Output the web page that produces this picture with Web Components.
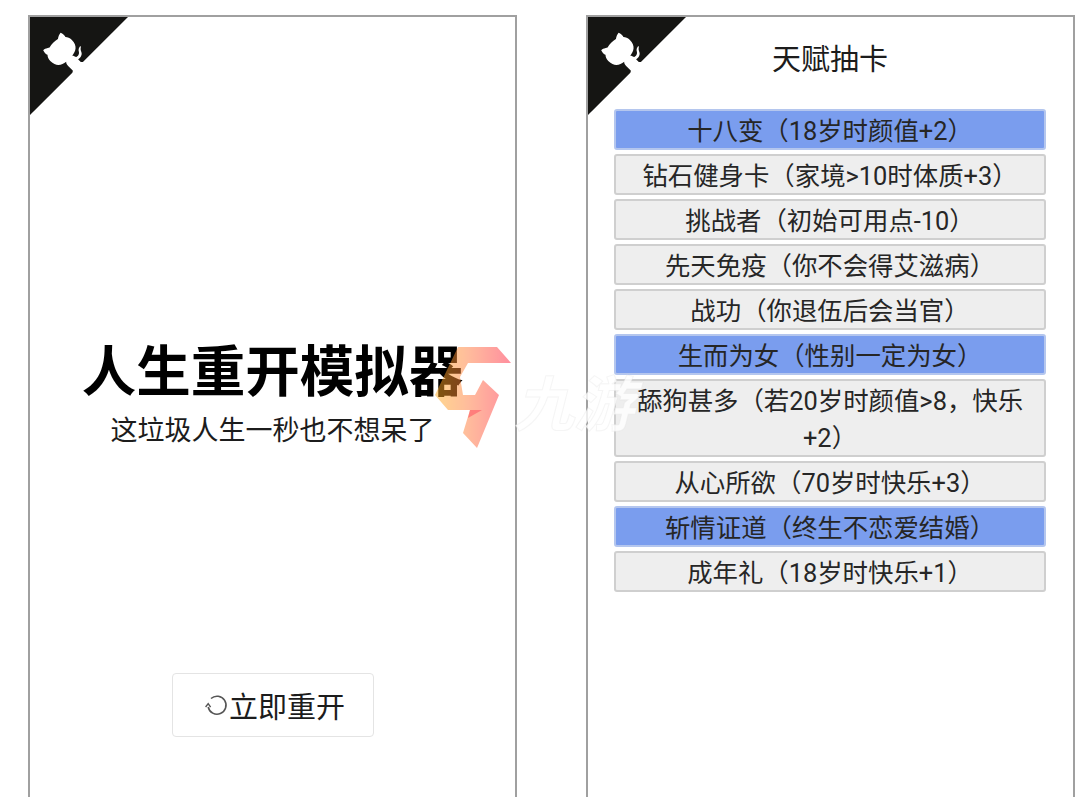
<!DOCTYPE html>
<html lang="zh">
<head>
<meta charset="utf-8">
<title>人生重开模拟器</title>
<style>
    html, body { margin: 0; height: 797px; overflow: hidden; background: #fff; }
    body { font-family: Roboto, "Noto Sans CJK SC", sans-serif; color: #1c1c1c; position: relative; }
    .screens { display: flex; gap: 69px; padding: 15px 0 0 28px; height: 797px; box-sizing: border-box; }
</style>
</head>
<body>
<div class="screens">
    <phone-screen>
        <home-view></home-view>
    </phone-screen>
    <phone-screen>
        <talent-view>
            <talent-row selected>十八变（18岁时颜值+2）</talent-row>
            <talent-row>钻石健身卡（家境&gt;10时体质+3）</talent-row>
            <talent-row>挑战者（初始可用点-10）</talent-row>
            <talent-row>先天免疫（你不会得艾滋病）</talent-row>
            <talent-row>战功（你退伍后会当官）</talent-row>
            <talent-row selected>生而为女（性别一定为女）</talent-row>
            <talent-row>舔狗甚多（若20岁时颜值&gt;8，快乐+2）</talent-row>
            <talent-row>从心所欲（70岁时快乐+3）</talent-row>
            <talent-row selected>斩情证道（终生不恋爱结婚）</talent-row>
            <talent-row>成年礼（18岁时快乐+1）</talent-row>
        </talent-view>
    </phone-screen>
</div>
<jiuyou-mark></jiuyou-mark>
<jiuyou-name></jiuyou-name>

<script>
class PhoneScreen extends HTMLElement {
    constructor() {
        super();
        this.attachShadow({ mode: 'open' });
    }

    connectedCallback() {
        this.shadowRoot.innerHTML = `
            <style>
                :host { display: block; position: relative; width: 489px; height: 100%; box-sizing: border-box;
                    border: solid #a0a0a0; border-width: 2px 2px 0 2px; background: #fff; }
                svg { position: absolute; top: 0; left: 0; width: 98px; height: 98px; fill: #151513; }
                .cat { fill: #fff; }
            </style>
            <svg viewBox="0 0 250 250" aria-hidden="true">
                <g transform="translate(250,0) scale(-1,1)">
                    <path d="M0,0 L115,115 L130,115 L142,142 L250,250 L250,0 Z"/>
                    <path class="cat" d="M128.3,109 C113.8,99.7 119,89.6 119,89.6 C122,82.7 120.5,78.6 120.5,78.6 C119.2,72 123.4,76.3 123.4,76.3 C127.3,80.9 125.5,87.3 125.5,87.3 C122.9,97.6 130.6,101.9 134.4,103.2"/>
                    <path class="cat" d="M115,115 C114.9,115.1 118.7,116.5 119.8,115.4 L133.7,101.6 C136.9,99.2 139.9,98.4 142.2,98.6 C133.8,88 127.5,74.4 143.8,58 C148.5,53.4 154,51.2 159.7,51 C160.3,49.4 163.2,43.6 171.4,40.1 C171.4,40.1 176.1,42.5 178.8,56.2 C183.1,58.6 187.2,61.8 190.9,65.4 C194.5,69 197.7,73.2 200.1,77.6 C213.8,80.2 216.3,84.9 216.3,84.9 C212.7,93.1 206.9,96 205.4,96.6 C205.1,102.4 203,107.8 198.3,112.5 C181.9,128.9 168.3,122.5 157.7,114.1 C157.9,116.9 156.7,120.9 152.7,124.9 L141,136.5 C139.8,137.7 141.6,141.9 141.8,141.8 Z"/>
                </g>
            </svg>
            <slot></slot>
        `;
    }
}
customElements.define('phone-screen', PhoneScreen);

class HomeView extends HTMLElement {
    constructor() {
        super();
        this.attachShadow({ mode: 'open' });
    }

    connectedCallback() {
        this.shadowRoot.innerHTML = `
            <style>
                :host { display: flex; flex-direction: column; align-items: center; height: 100%; padding-top: 320px; box-sizing: border-box; }
                h1 { margin: 0; font-size: 54.5px; line-height: 70px; font-weight: 700; color: #000; }
                p { margin: 4px 0 0; font-size: 27px; line-height: 40px; }
                button { margin-top: 222px; width: 202px; height: 64px; box-sizing: border-box; display: flex; align-items: center; justify-content: center;
                    background: #fff; border: 1px solid #e4e4e4; border-radius: 4px; font: inherit; font-size: 29px; color: inherit; padding: 0 0 0 3px; }
                svg { width: 26px; height: 26px; fill: none; stroke: #555; stroke-width: 1.6; }
            </style>
            <h1>人生重开模拟器</h1>
            <p>这垃圾人生一秒也不想呆了</p>
            <button>
                <svg viewBox="0 0 26 26" aria-hidden="true">
                    <path d="M8 6.5 A9 9 0 1 1 5.2 15"/>
                    <path d="M2.6 15 L5.2 11.6 L7.6 15.2" stroke-width="1.4"/>
                </svg>立即重开
            </button>
        `;
    }
}
customElements.define('home-view', HomeView);

class TalentView extends HTMLElement {
    constructor() {
        super();
        this.attachShadow({ mode: 'open' });
    }

    connectedCallback() {
        this.shadowRoot.innerHTML = `
            <style>
                :host { display: block; padding: 0 27px 0 26px; }
                h2 { margin: 0; height: 92px; font-size: 29px; line-height: 87px; font-weight: 400; text-align: center; }
                .list { display: flex; flex-direction: column; gap: 4px; }
            </style>
            <h2>天赋抽卡</h2>
            <div class="list"><slot></slot></div>
        `;
    }
}
customElements.define('talent-view', TalentView);

class TalentRow extends HTMLElement {
    constructor() {
        super();
        this.attachShadow({ mode: 'open' });
    }

    connectedCallback() {
        this.shadowRoot.innerHTML = `
            <style>
                :host { display: block; box-sizing: border-box; padding: 0 6px; border: 2px solid #cfcfcf; border-radius: 3px;
                    background: #eeeeee; font-size: 25.4px; line-height: 37px; text-align: center; color: #262626; }
                :host([selected]) { background: #7a9dee; border-color: #b4c6ee; }
                .text { display: block; margin: 2px 0 -2px; }
            </style>
            <span class="text"><slot></slot></span>
        `;
    }
}
customElements.define('talent-row', TalentRow);

class JiuyouMark extends HTMLElement {
    constructor() {
        super();
        this.attachShadow({ mode: 'open' });
    }

    connectedCallback() {
        this.shadowRoot.innerHTML = `
            <style>
                :host { display: block; position: absolute; left: 430px; top: 340px; width: 90px; height: 115px; }
                svg { display: block; width: 100%; height: 100%; }
            </style>
            <svg viewBox="430 340 90 115" aria-hidden="true">
                <defs>
                    <linearGradient id="g" gradientUnits="userSpaceOnUse" x1="434" y1="0" x2="511" y2="0">
                        <stop offset="0" stop-color="#ffb020"/>
                        <stop offset=".45" stop-color="#ff7a3c"/>
                        <stop offset="1" stop-color="#ff2040"/>
                    </linearGradient>
                </defs>
                <g fill="url(#g)" opacity=".5">
                    <path d="M458 347 H497 L511 363 H468 L460 377 L463 395 H435 Z"/>
                    <path d="M435 395 H475 L483 380 L499 395 L477 448 L463 433 L470 410 H448 Z"/>
                </g>
                <path fill="#ff5060" opacity=".55" d="M470 410 H482 L468 418 Z"/>
            </svg>
        `;
    }
}
customElements.define('jiuyou-mark', JiuyouMark);

class JiuyouName extends HTMLElement {
    constructor() {
        super();
        this.attachShadow({ mode: 'open' });
    }

    connectedCallback() {
        this.shadowRoot.innerHTML = `
            <style>
                :host { display: block; position: absolute; left: 514px; top: 370px; font-size: 60px; line-height: 72px;
                    font-style: italic; font-weight: 700; color: rgba(255,255,255,.8); -webkit-text-stroke: 1px rgba(225,225,225,.35); }
            </style>
            九游
        `;
    }
}
customElements.define('jiuyou-name', JiuyouName);
</script>
</body>
</html>
